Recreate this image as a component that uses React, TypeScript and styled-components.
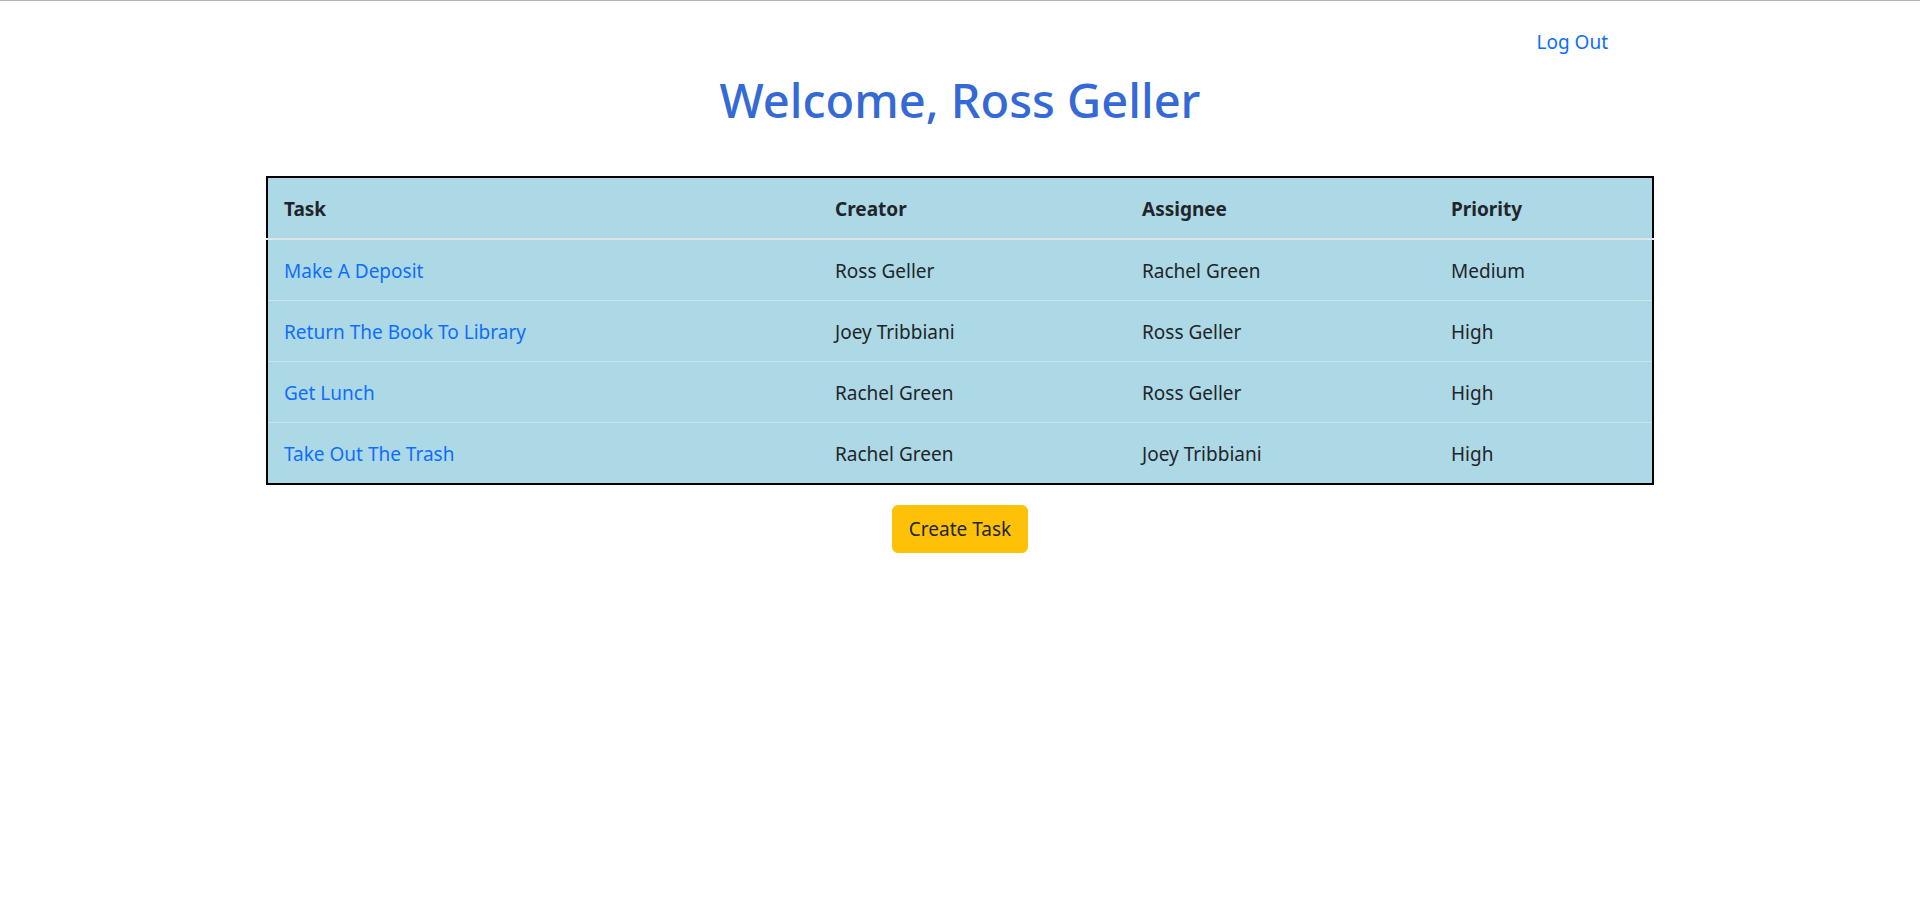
import styled, { createGlobalStyle } from 'styled-components';

type Task = {
  title: string;
  creator: string;
  assignee: string;
  priority: string;
};

const tasks: Task[] = [
  { title: 'Make A Deposit', creator: 'Ross Geller', assignee: 'Rachel Green', priority: 'Medium' },
  { title: 'Return The Book To Library', creator: 'Joey Tribbiani', assignee: 'Ross Geller', priority: 'High' },
  { title: 'Get Lunch', creator: 'Rachel Green', assignee: 'Ross Geller', priority: 'High' },
  { title: 'Take Out The Trash', creator: 'Rachel Green', assignee: 'Joey Tribbiani', priority: 'High' },
];

// column widths include the 16px side padding of each cell
const columns = [
  { label: 'Task', width: 551 },
  { label: 'Creator', width: 307 },
  { label: 'Assignee', width: 309 },
  { label: 'Priority', width: 217 },
];

const App = () => {
  return (
    <>
      <GlobalStyle />
      <Page>
        <Nav>
          <NavLink href="#">Log Out</NavLink>
        </Nav>
        <Title>Welcome, Ross Geller</Title>
        <Table>
          <thead>
            <tr>
              {columns.map((col) => (
                <HeadCell key={col.label} $width={col.width}>
                  {col.label}
                </HeadCell>
              ))}
            </tr>
          </thead>
          <tbody>
            {tasks.map((task) => (
              <Row key={task.title}>
                <Cell>
                  <TaskLink href="#">{task.title}</TaskLink>
                </Cell>
                <Cell>{task.creator}</Cell>
                <Cell>{task.assignee}</Cell>
                <Cell>{task.priority}</Cell>
              </Row>
            ))}
          </tbody>
        </Table>
        <Actions>
          <CreateButton type="button">Create Task</CreateButton>
        </Actions>
      </Page>
    </>
  );
};

export default App;

const GlobalStyle = createGlobalStyle`
  body {
    margin: 0;
    background: #fff;
    color: #212529;
    font-family: 'Segoe UI', 'Noto Sans', sans-serif;
    font-size: 19px;
    line-height: 1.5;
  }
`;

const Page = styled.div`
  min-height: 903px;
  border-top: 1px solid #b3b3b3;
  display: flex;
  flex-direction: column;
`;

const Nav = styled.nav`
  display: flex;
  justify-content: flex-end;
  padding: 26px 312px 0 0;
`;

const NavLink = styled.a`
  color: #0d6efd;
  text-decoration: none;
  font-size: 19px;
  line-height: 30px;
`;

const Title = styled.h1`
  margin: 13px 0 46px;
  text-align: center;
  color: #3469d6;
  font-size: 47px;
  font-weight: 500;
  line-height: 60px;
`;

const Table = styled.table`
  width: 1388px;
  margin: 0 auto;
  table-layout: fixed;
  border-collapse: collapse;
  border: 2px solid #000;
  background: #add8e6;
  color: #212529;
`;

const HeadCell = styled.th<{ $width: number }>`
  width: ${({ $width }) => `${$width - 32}px`};
  padding: 16px 16px 14px;
  text-align: left;
  font-weight: 700;
  line-height: 30px;
  border-bottom: 2px solid #dde3e7;
`;

const Row = styled.tr`
  border-bottom: 1px solid #c9e4ec;

  &:last-child {
    border-bottom: none;
  }
`;

const Cell = styled.td`
  padding: 16px 16px 14px;
  line-height: 30px;
`;

const TaskLink = styled.a`
  color: #0d6efd;
  text-decoration: none;
`;

const Actions = styled.div`
  display: flex;
  justify-content: center;
  margin-top: 20px;
`;

const CreateButton = styled.button`
  padding: 8px 16px;
  border: 1px solid #ffc107;
  border-radius: 6px;
  background: #ffc107;
  color: #212529;
  font-family: inherit;
  font-size: 19px;
  line-height: 30px;
  cursor: pointer;
`;
